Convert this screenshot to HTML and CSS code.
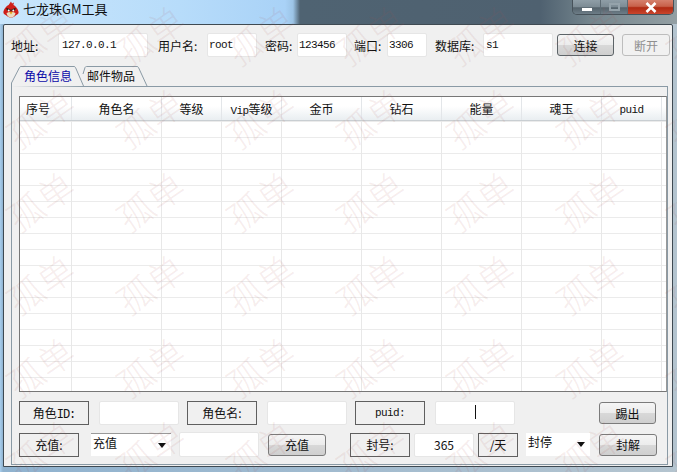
FILE: index.html
```html
<!DOCTYPE html>
<html lang="zh-CN">
<head>
<meta charset="utf-8">
<title>七龙珠GM工具</title>
<link rel="stylesheet" href="styles.css">
</head>
<body>
<div class="window">
  <header class="titlebar">
    <svg class="app-icon" width="16" height="17" viewBox="0 0 16 17">
      <path d="M8 0.5 L9 2.6 L11 1.6 L10.4 4 C13 5 15.6 9 15.6 11.5 C15.6 13 14 13.6 13 14.2 C11.5 15.8 9.5 16.5 8 16.5 C6.5 16.5 4.5 15.8 3 14.2 C2 13.6 0.4 13 0.4 11.5 C0.4 9 3 5 5.6 4 Z" fill="#cf1f1a"/>
      <path d="M3.5 12 C5 10.5 11 10.5 12.5 12 C12 15 10 16.5 8 16.5 C6 16.5 4 15 3.5 12 Z" fill="#eadcc0"/>
      <path d="M3.2 6.8 L7.6 8.6 L7.6 10.4 L4 9.4 Z M12.8 6.8 L8.4 8.6 L8.4 10.4 L12 9.4 Z" fill="#2a1a14"/>
      <circle cx="5.7" cy="9.6" r="1" fill="#fff"/><circle cx="10.3" cy="9.6" r="1" fill="#fff"/>
      <path d="M6.2 10.8 L9.8 10.8 L8 13.4 Z" fill="#e8a020"/>
    </svg>
    <span class="app-title">七龙珠GM工具</span>
    <div class="caption-buttons">
      <div class="cap cap-min"><i class="min-glyph"></i></div>
      <div class="cap cap-max"><i class="max-glyph"></i></div>
      <div class="cap cap-close">
        <svg width="14" height="11" viewBox="0 0 14 11"><path d="M2.5 1 L11.5 10 M11.5 1 L2.5 10" stroke="#fff" stroke-width="2.6"/></svg>
      </div>
    </div>
  </header>

  <main class="client">
    <div class="conn-row">
      <span class="lbl w-addr">地址:</span>
      <div class="field f-addr mono">127.0.0.1</div>
      <span class="lbl w-user">用户名:</span>
      <div class="field f-user mono">root</div>
      <span class="lbl w-pass">密码:</span>
      <div class="field f-pass mono">123456</div>
      <span class="lbl w-port">端口:</span>
      <div class="field f-port mono">3306</div>
      <span class="lbl w-db">数据库:</span>
      <div class="field f-db mono">s1</div>
      <button class="btn b-conn">连接</button>
      <button class="btn b-off" disabled>断开</button>
    </div>

    <div class="tabs">
      <div class="tab tab-active">
        <svg class="tab-shape" width="74" height="21" viewBox="0 0 74 21"><path d="M0.5 21 V17 L8.5 1.5 Q9 0.5 10 0.5 H63 Q64 0.5 64.5 1.5 L72.5 20" fill="#f0f0f0" stroke="#8a9aa5"/></svg>
        <span>角色信息</span>
      </div>
      <div class="tab tab-second">
        <svg class="tab-shape" width="67" height="21" viewBox="0 0 67 21"><path d="M1 8 L3 1.5 Q3.5 0.5 4.5 0.5 H55 Q56 0.5 56.5 1.5 L65 20" fill="none" stroke="#8a9aa5"/></svg>
        <span>邮件物品</span>
      </div>
    </div>

    <section class="pane">
      <div class="grid">
        <div class="grid-head">
          <div class="hc c0">序号</div>
          <div class="hc c1">角色名</div>
          <div class="hc c2">等级</div>
          <div class="hc c2"><span class="mono">Vip</span>等级</div>
          <div class="hc c3">金币</div>
          <div class="hc c3">钻石</div>
          <div class="hc c3">能量</div>
          <div class="hc c3">魂玉</div>
          <div class="hc c2 mono hc-puid">puid</div>
        </div>
        <div class="grid-body">
          <div class="col c0"></div>
          <div class="col c1"></div>
          <div class="col c2"></div>
          <div class="col c2"></div>
          <div class="col c3"></div>
          <div class="col c3"></div>
          <div class="col c3"></div>
          <div class="col c3"></div>
          <div class="col c2"></div>
        </div>
      </div>

      <div class="form-row row-a">
        <div class="tag t-role">角色<span class="mono tag-id">ID:</span></div>
        <div class="field f-a1"></div>
        <div class="tag t-name">角色名:</div>
        <div class="field f-a2"></div>
        <div class="tag t-puid mono">puid:</div>
        <div class="field f-a3"><i class="caret"></i></div>
        <button class="btn b-kick">踢出</button>
      </div>

      <div class="form-row row-b">
        <div class="tag t-pay">充值:</div>
        <div class="select s-pay">充值</div>
        <div class="field f-b1"></div>
        <button class="btn b-pay">充值</button>
        <div class="tag t-ban">封号:</div>
        <div class="field f-b2 num">365</div>
        <div class="tag t-day">/天</div>
        <div class="select s-ban">封停</div>
        <button class="btn b-unban">封解</button>
      </div>
    </section>
  </main>

  <div class="watermark" aria-hidden="true">
    <span>孤单</span><span>孤单</span><span>孤单</span><span>孤单</span><span>孤单</span><span>孤单</span><span>孤单</span>
    <span>孤单</span><span>孤单</span><span>孤单</span><span>孤单</span><span>孤单</span><span>孤单</span><span>孤单</span>
    <span>孤单</span><span>孤单</span><span>孤单</span><span>孤单</span><span>孤单</span><span>孤单</span><span>孤单</span>
    <span>孤单</span><span>孤单</span><span>孤单</span><span>孤单</span><span>孤单</span><span>孤单</span><span>孤单</span>
    <span>孤单</span><span>孤单</span><span>孤单</span><span>孤单</span><span>孤单</span><span>孤单</span><span>孤单</span>
    <span>孤单</span><span>孤单</span><span>孤单</span><span>孤单</span><span>孤单</span><span>孤单</span><span>孤单</span>
  </div>
</div>
</body>
</html>
```

FILE: styles.css
```css
* { box-sizing: border-box; }
html, body { margin: 0; padding: 0; }
body {
  width: 677px;
  height: 472px;
  overflow: hidden;
  font-family: "Noto Sans CJK SC", "Liberation Sans", sans-serif;
  font-size: 12px;
  color: #111;
}
.window {
  position: relative;
  width: 677px;
  height: 472px;
  overflow: hidden;
  display: flex;
  flex-direction: column;
  background: linear-gradient(90deg, #a9cfee 0, #8fb2cf 3px, #b4c4cf 100%);
}
.titlebar {
  height: 24px;
  flex: none;
  display: flex;
  align-items: flex-start;
  padding-left: 3px;
  background: linear-gradient(90deg, #c9e6fc 0, #b7dcfa 180px, #a9d2f7 285px, #9cc4e6 293px, #4f6372 300px, #4f6170 540px, #74858d 590px, #939fa3 677px);
}
.app-icon { margin-top: 1px; flex: none; }
.app-title {
  margin-left: 4px;
  margin-top: 0;
  font-size: 13px;
  line-height: 18px;
  color: #111;
}
.caption-buttons {
  margin-left: auto;
  margin-right: 3px;
  display: flex;
  height: 15px;
  border: 1px solid #47525a;
  border-top: 0;
  border-radius: 0 0 5px 5px;
  overflow: hidden;
}
.cap { display: flex; align-items: center; justify-content: center; }
.cap-min, .cap-max { width: 28px; border-right: 1px solid #5d6b74; background: linear-gradient(#8f9ea7, #7c8b94 50%, #54626b 55%, #6d7d87); }
.cap-max { width: 27px; }
.cap-close { width: 45px; background: linear-gradient(#d5806c, #c8614a 45%, #b02a12 55%, #c9452c); }
.min-glyph { width: 10px; height: 3px; background: #fff; margin-top: 4px; }
.max-glyph { width: 11px; height: 8px; border: 2px solid #95a3ab; }

.client {
  flex: none;
  width: 670px;
  height: 443px;
  margin-left: 3px;
  border: 1px solid #3f4a52;
  border-radius: 2px 2px 0 0;
  background: #f0f0f0;
  display: flex;
  flex-direction: column;
}

.mono { font-family: "Liberation Mono", "DejaVu Sans Mono", monospace; font-size: 11px; letter-spacing: -.6px; }
.lbl { flex: none; white-space: nowrap; }

.field {
  flex: none;
  height: 24px;
  background: #fff;
  border: 1px solid #e6e6e6;
  border-radius: 2px;
  line-height: 22px;
  color: #111;
}

.conn-row {
  display: flex;
  align-items: center;
  height: 32px;
  margin-top: 4px;
  padding-left: 7px;
}
.w-addr { width: 47px; }
.f-addr { width: 90px; padding-left: 3px; }
.w-user { width: 49px; margin-left: 10px; }
.f-user { width: 50px; padding-left: 1px; }
.w-pass { width: 32px; margin-left: 8px; }
.f-pass { width: 50px; padding-left: 1px; }
.w-port { width: 33px; margin-left: 7px; }
.f-port { width: 40px; padding-left: 1px; }
.w-db { width: 48px; margin-left: 8px; }
.f-db { width: 70px; padding-left: 2px; }

.btn {
  flex: none;
  height: 22px;
  padding: 0;
  font: inherit;
  color: #111;
  border: 1px solid #7b7b7b;
  border-radius: 3px;
  background: linear-gradient(#f5f5f5, #ececec 50%, #d8d8d8 52%, #cfcfcf);
}
.b-conn { width: 57px; margin-left: 4px; border-color: #5d6468; }
.b-off { width: 48px; margin-left: 8px; color: #8f8f8f; border-color: #bdbdbd; background: #f1f1f1; }

.tabs {
  display: flex;
  height: 21px;
  margin-top: 5px;
  padding-left: 7px;
  position: relative;
  z-index: 1;
}
.tab { position: relative; height: 21px; line-height: 20px; }
.tab span { position: relative; }
.tab-shape { position: absolute; left: 0; top: 0; }
.tab-active { width: 71px; padding-left: 13px; color: #0a0aa8; }
.tab-second { width: 67px; padding-left: 5px; }

.pane {
  flex: none;
  width: 657px;
  height: 379px;
  margin-left: 7px;
  margin-top: -1px;
  border: 1px solid #8a9aa5;
  padding: 9px 0 0 7px;
}
.grid {
  width: 648px;
  height: 296px;
  border: 1px solid #777;
  border-right-color: #999;
  background: #fff;
  display: flex;
  flex-direction: column;
}
.grid-head {
  flex: none;
  height: 24px;
  display: flex;
  background: linear-gradient(#fff, #fff 40%, #e9eef1);
  border-bottom: 1px solid #c9ced2;
}
.hc {
  flex: none;
  text-align: center;
  line-height: 23px;
  border-right: 1px solid #e3e6e9;
}
.hc-puid { line-height: 27px; }
.grid-head .c0 { text-align: left; padding-left: 6px; }
.c0 { width: 52px; }
.c1 { width: 90px; }
.c2 { width: 60px; }
.c3 { width: 80px; }
.grid-body {
  flex: 1;
  display: flex;
  background: linear-gradient(#fff 0, #fff 15px, #ebebeb 15px, #ebebeb 16px) 0 1px / 100% 16px;
}
.col { flex: none; border-right: 1px solid #e8e8e8; }

.form-row { display: flex; align-items: center; }
.row-a { height: 24px; margin-top: 9px; }
.row-b { height: 25px; margin-top: 7px; }
.tag {
  flex: none;
  height: 24px;
  border: 1px solid #5f5f5f;
  background: #f0f0f0;
  text-align: center;
  line-height: 22px;
}
.tag-id { font-size: 12px; letter-spacing: -1px; }
.t-role { width: 70px; }
.f-a1 { width: 80px; margin-left: 10px; }
.t-name { width: 70px; margin-left: 8px; }
.f-a2 { width: 80px; margin-left: 10px; }
.t-puid { width: 70px; margin-left: 8px; }
.f-a3 { width: 80px; margin-left: 10px; position: relative; }
.caret { position: absolute; left: 39px; top: 3px; width: 1px; height: 14px; background: #111; }
.b-kick { width: 57px; margin-left: 84px; }
.t-pay { width: 60px; }
.select {
  flex: none;
  height: 23px;
  background: #fff;
  border-top: 1px solid #999;
  padding-left: 2px;
  line-height: 18px;
  font-size: 12px;
  position: relative;
}
.select::after {
  content: "";
  position: absolute;
  right: 5px;
  top: 9px;
  border: 4px solid transparent;
  border-top: 5px solid #111;
  border-bottom: 0;
}
.s-pay { width: 80px; margin-left: 12px; }
.f-b1 { width: 80px; margin-left: 8px; height: 25px; }
.b-pay { width: 58px; margin-left: 9px; }
.t-ban { width: 60px; margin-left: 24px; }
.f-b2 { width: 60px; margin-left: 4px; }
.num { text-align: center; font-size: 12px; }
.t-day { width: 40px; margin-left: 4px; }
.s-ban { width: 64px; margin-left: 8px; border-top: 0; }
.b-unban { width: 58px; margin-left: 9px; }

.watermark {
  position: absolute;
  left: -16px;
  top: -8px;
  display: grid;
  grid-template-columns: repeat(7, 110px);
  grid-auto-rows: 83px;
  pointer-events: none;
  z-index: 5;
}
.watermark span {
  display: flex;
  align-items: center;
  justify-content: center;
  font-size: 36px;
  font-weight: 300;
  color: rgba(170, 80, 80, .11);
  transform: rotate(-35deg);
  white-space: nowrap;
}
```
